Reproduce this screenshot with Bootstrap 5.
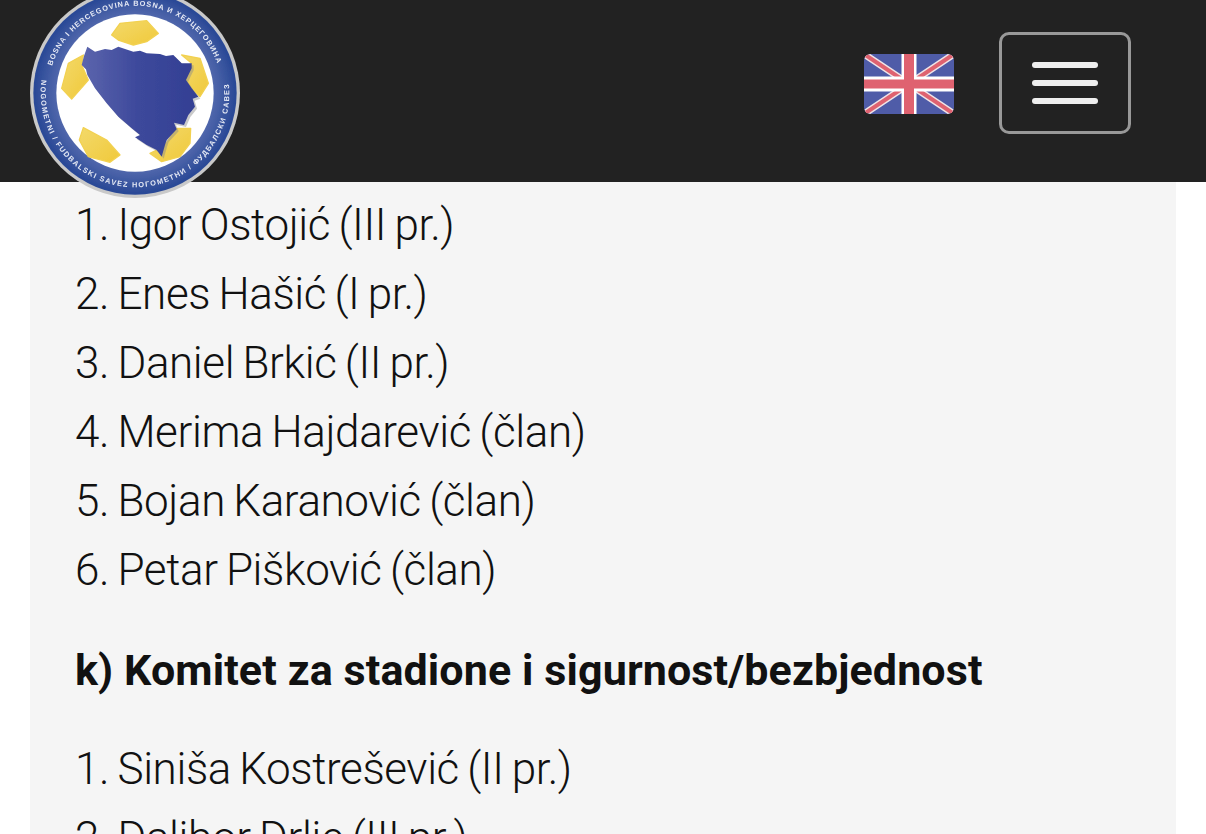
<!DOCTYPE html>
<html lang="bs">
<head>
<meta charset="utf-8">
<title>Komiteti</title>
<link href="https://cdn.jsdelivr.net/npm/bootstrap@5.3.0/dist/css/bootstrap.min.css" rel="stylesheet">
<style>
html,body{height:834px;overflow:hidden;background:#fff}
body{font-family:"Roboto","Liberation Sans",sans-serif;color:#111}
.top-bar{height:182px;background:#222;padding:0 75px 16px 0;position:relative;z-index:2;gap:45px}
.crest{position:absolute;left:30px;top:-12px;width:210px;height:210px;z-index:3}
.crest-ring-text{font-family:"Liberation Sans",sans-serif;font-size:22px;font-weight:700;fill:#e6eaf5}
.flag-box{width:90px;height:60px;border-radius:6px;display:block;margin-top:2px}
.menu-btn{width:132px;height:102px;border:3px solid #999;border-radius:10px;background:transparent;gap:12px;padding:0}
.menu-btn span{display:block;width:66px;height:6px;border-radius:3px;background:#eee}
.sheet{background:#f5f5f5;margin:0 30px;padding:9px 45px 0 46px;height:652px;overflow:hidden}
.person{font-size:44px;line-height:69px;margin:0 0 0 -1px;font-weight:300;letter-spacing:-.4px;word-spacing:-2px;white-space:nowrap}
.group-title{font-size:43px;line-height:69px;font-weight:700;margin:31px 0 30px -1px;letter-spacing:.11px;white-space:nowrap}
</style>
</head>
<body>
<svg class="crest" viewBox="90 -36 630 630" role="img" aria-label="Grb saveza">
  <defs>
    <linearGradient id="mapfill" x1="0" x2="1" y1="0" y2="0">
      <stop offset="0" stop-color="#5c65ad"/><stop offset=".5" stop-color="#3c489b"/><stop offset="1" stop-color="#333f93"/>
    </linearGradient>
    <linearGradient id="goldfill" x1="0" x2="1" y1="0" y2="1">
      <stop offset="0" stop-color="#f3d96b"/><stop offset="1" stop-color="#f0c93a"/>
    </linearGradient>
    <radialGradient id="ringfill" cx=".5" cy=".5" r=".5">
      <stop offset=".78" stop-color="#4f66ab"/><stop offset=".98" stop-color="#2b4a97"/>
    </radialGradient>
    <filter id="soft" x="-5%" y="-5%" width="110%" height="110%"><feGaussianBlur stdDeviation="1.5"/></filter>
    <path id="arcTop" d="M155.8 198A262 262 0 0 1 652.7 193.7"/>
    <path id="arcBot" d="M124.8 239.6A283 283 0 1 0 685.9 244.5"/>
    <path id="bihmap" d="M262 140 252 168 245 195 258 208 262 225 285 265 320 310 355 350 395 385 420 405 405 412 440 435 470 450 485 470 495 435 500 420 530 388 522 368 552 375 565 345 585 320 578 296 595 290 575 265 558 240 575 205 575 190 545 190 520 165 498 168 480 162 440 160 420 152 400 155 355 140 335 150 315 147 285 155Z"/>
  </defs>
  <g filter="url(#soft)">
    <circle cx="405" cy="279" r="315" fill="#c9c9c9"/>
    <circle cx="405" cy="279" r="305" fill="url(#ringfill)"/>
    <circle cx="405" cy="279" r="236" fill="#fff"/>
    <text class="crest-ring-text"><textPath href="#arcTop" textLength="650">BOSNA I HERCEGOVINA BOSNA И ХЕРЦЕГОВИНА</textPath></text>
    <text class="crest-ring-text"><textPath href="#arcBot" textLength="955">NOGOMETNI / FUDBALSKI SAVEZ НОГОМЕТНИ / ФУДБАЛСКИ САВЕЗ</textPath></text>
    <g fill="url(#goldfill)" stroke="#f2d150" stroke-width="4" stroke-linejoin="round">
      <path d="M335 105 360 70 440 62 475 100 440 125 400 135 355 120Z"/>
      <path d="M250 165 205 190 185 265 215 297 265 240 245 195Z"/>
      <path d="M545 165 600 175 625 250 600 290 575 265 555 240 575 205 575 190Z"/>
      <path d="M250 383 238 420 265 470 330 487 360 465 320 420Z"/>
      <path d="M530 385 572 385 570 430 540 470 485 485 450 460 470 450 485 470 495 435Z"/>
    </g>
    <use href="#bihmap" fill="#8a8a8a" opacity=".45" transform="translate(6 6)"/>
    <use href="#bihmap" fill="url(#mapfill)"/>
  </g>
</svg>

<nav class="top-bar d-flex align-items-center justify-content-end">
  <svg class="flag-box" viewBox="0 0 90 60" role="img" aria-label="English">
    <defs><clipPath id="fc"><rect width="90" height="60" rx="6"/></clipPath></defs>
    <g clip-path="url(#fc)">
      <rect width="90" height="60" fill="#4f5ca8"/>
      <path d="M0 0 90 60M90 0 0 60" stroke="#efe3e6" stroke-width="7"/>
      <path d="M0 0 90 60M90 0 0 60" stroke="#df6270" stroke-width="4"/>
      <path d="M45 0V60" stroke="#fff" stroke-width="15"/>
      <path d="M0 30H90" stroke="#fff" stroke-width="15"/>
      <path d="M45 0V60" stroke="#df6270" stroke-width="10"/>
      <path d="M0 30H90" stroke="#df6270" stroke-width="9"/>
    </g>
  </svg>
  <button class="menu-btn d-flex flex-column align-items-center justify-content-center" type="button" aria-label="Menu">
    <span></span><span></span><span></span>
  </button>
</nav>

<main class="sheet">
  <p class="person">1. Igor Ostojić (III pr.)</p>
  <p class="person">2. Enes Hašić (I pr.)</p>
  <p class="person">3. Daniel Brkić (II pr.)</p>
  <p class="person">4. Merima Hajdarević (član)</p>
  <p class="person">5. Bojan Karanović (član)</p>
  <p class="person">6. Petar Pišković (član)</p>
  <p class="group-title">k) Komitet za stadione i sigurnost/bezbjednost</p>
  <p class="person">1. Siniša Kostrešević (II pr.)</p>
  <p class="person">2. Dalibor Drlje (III pr.)</p>
</main>
<script src="https://cdn.jsdelivr.net/npm/bootstrap@5.3.0/dist/js/bootstrap.bundle.min.js"></script>
</body>
</html>
